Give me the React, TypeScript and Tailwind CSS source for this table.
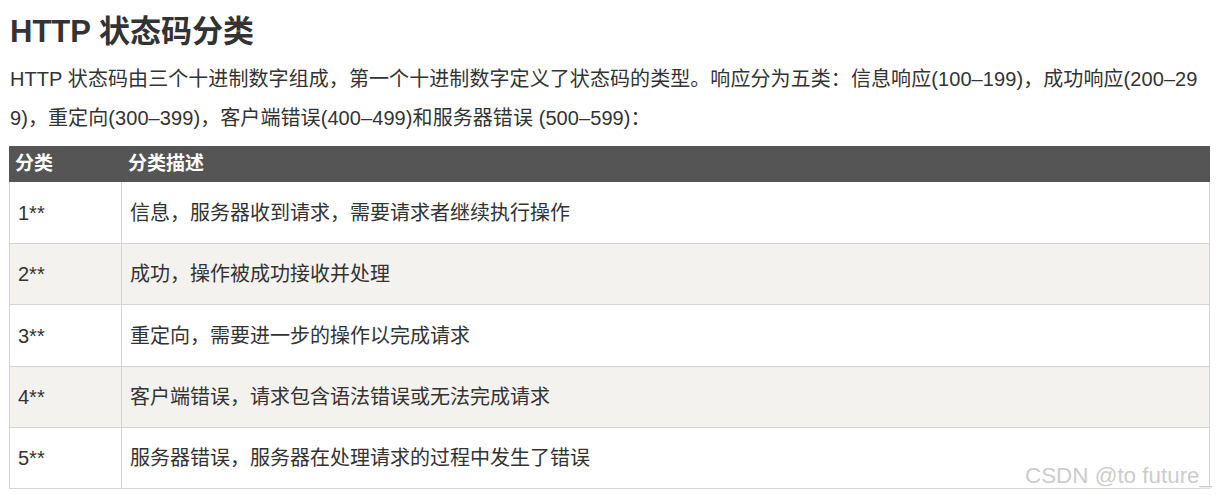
import React from "react";

const rows = [
  { code: "1**", desc: "信息，服务器收到请求，需要请求者继续执行操作", h: "h-[62px]" },
  { code: "2**", desc: "成功，操作被成功接收并处理", h: "h-[61px]" },
  { code: "3**", desc: "重定向，需要进一步的操作以完成请求", h: "h-[62px]" },
  { code: "4**", desc: "客户端错误，请求包含语法错误或无法完成请求", h: "h-[61px]" },
  { code: "5**", desc: "服务器错误，服务器在处理请求的过程中发生了错误", h: "h-[61px]" },
];

export default function App() {
  return (
    <div
      className="relative w-[1216px] h-[495px] bg-white pl-[9px] pr-[6px] text-[#333333] overflow-hidden"
      style={{ fontFamily: '"Liberation Sans", "Noto Sans CJK SC", sans-serif' }}
    >
      <h1 className="pt-[14px] text-[31px] leading-[36px] font-bold pl-[1px]">HTTP 状态码分类</h1>
      <p className="mt-[10px] text-[20px] leading-[39px] pl-[1px] break-all tracking-[0.08px]">
        HTTP 状态码由三个十进制数字组成，第一个十进制数字定义了状态码的类型。响应分为五类：信息响应(100–199)，成功响应(200–299)，重定向(300–399)，客户端错误(400–499)和服务器错误 (500–599)：
      </p>
      <div className="mt-[8px] w-[1201px]">
        <div className="flex h-[36px] bg-[#555555] text-white font-bold text-[19px] items-center">
          <div className="w-[113px] pl-[6px]">分类</div>
          <div className="flex-1 pl-[6px]">分类描述</div>
        </div>
        <div className="border-l border-r border-[#d4d4d4] w-[1201px]">
          {rows.map((r, i) => (
            <div
              key={r.code}
              className={`flex ${r.h} border-b border-[#d4d4d4] text-[20px] ${i % 2 === 1 ? "bg-[#f3f2ef]" : "bg-white"}`}
            >
              <div className="w-[112px] pl-[8px] flex items-center border-r border-[#d4d4d4]">{r.code}</div>
              <div className="flex-1 pl-[8px] flex items-center">{r.desc}</div>
            </div>
          ))}
        </div>
      </div>
      <div
        className="absolute left-[1025px] top-[463px] text-[22.4px] leading-[26px] text-[#cccccc] whitespace-nowrap"
        style={{ textShadow: "1px 1px 1px rgba(255,255,255,0.9)" }}
      >
        CSDN @to future_
      </div>
    </div>
  );
}
